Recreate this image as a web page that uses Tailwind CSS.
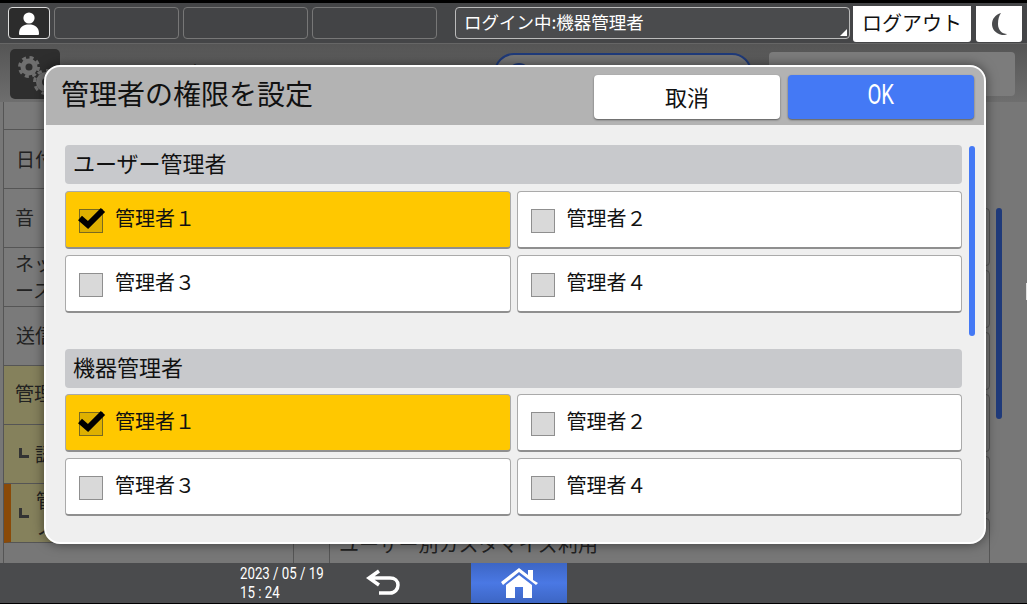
<!DOCTYPE html>
<html lang="ja">
<head>
<meta charset="UTF-8">
<title>管理者の権限を設定</title>
<script src="https://cdn.jsdelivr.net/npm/@tailwindcss/browser@4"></script>
</head>
<body class="bg-black font-['Noto_Sans_CJK_JP','Noto_Sans',sans-serif] text-[#111]">
<div class="relative w-[1027px] h-[604px] overflow-hidden flex flex-col bg-[#777]">

  <!-- top status bar -->
  <div class="h-[3px] bg-black"></div>
  <div class="h-[41px] bg-[#444547] border-b border-[#666] flex items-start pt-[4px] pl-[8px] shrink-0">
    <div class="w-[42px] h-[32px] rounded-[4px] border border-[#ddd] bg-[#2c2c2c] flex items-center justify-center">
      <svg width="22" height="26" viewBox="0 0 22 26"><circle cx="11" cy="8" r="5.6" fill="#fff"/><path d="M1 24c0-7 4-9.500 10-9.500s10 2.500 10 9.500c0 .8-.6 1-1.500 1h-17c-.9 0-1.500-.2-1.500-1z" fill="#fff"/></svg>
    </div>
    <div class="w-[125px] h-[32px] ml-[4px] rounded-[4px] border border-[#777] bg-[#434446]"></div>
    <div class="w-[125px] h-[32px] ml-[4px] rounded-[4px] border border-[#777] bg-[#434446]"></div>
    <div class="w-[125px] h-[32px] ml-[4px] rounded-[4px] border border-[#777] bg-[#434446]"></div>
    <div class="relative w-[395px] h-[32px] ml-[18px] rounded-[4px] border border-[#bbb] bg-[#4a4b4d] text-white text-[17.5px] leading-[28px] pl-[8px]">
      ログイン中:機器管理者
      <div class="absolute right-[2px] bottom-[2px] w-0 h-0 border-l-[7px] border-l-transparent border-b-[7px] border-b-white"></div>
    </div>
    <div class="w-[118px] h-[36px] -mt-[1px] ml-[3px] rounded-b-[3px] bg-white text-[20px] leading-[33px] text-center">ログアウト</div>
    <div class="w-[46px] h-[36px] -mt-[1px] ml-[5px] rounded-b-[3px] bg-white flex items-center justify-center">
      <svg width="18" height="24" viewBox="0 0 18 24"><path d="M11 1C5 3 2 7 2 12s3 9 10 11c2 .3 4 0 5-1-5 0-9-4-9-10 0-5 1-8 3-11z" fill="#4a4b4d"/></svg>
    </div>
  </div>

  <!-- screen header behind the dialog -->
  <div class="h-[58px] bg-gradient-to-b from-[#555] to-[#6e6e6e] flex items-start pt-[5px] pl-[10px] shrink-0">
    <div class="w-[50px] h-[50px] rounded-[5px] bg-[#2e2e2e] flex items-start pt-[6px] pl-[5px]">
      <svg width="44" height="40" viewBox="0 0 44 40" fill="none" stroke="#6f6f6f"><circle cx="14" cy="12" r="6" stroke-width="5"/><circle cx="14" cy="12" r="9.500" stroke-width="3" stroke-dasharray="4 3.500"/><circle cx="31" cy="27" r="7" stroke-width="6"/><circle cx="31" cy="27" r="11.500" stroke-width="3" stroke-dasharray="4.500 4.500"/></svg>
    </div>
    <div class="ml-[105px] mt-[12px] text-[20px] leading-[26px] text-[#222]">設定</div>
    <div class="ml-[289px] mt-[4px] w-[258px] h-[40px] rounded-[20px] border-2 border-[#1f3a7a] bg-[#757575] pl-[12px] pt-[8px]">
      <span class="block w-[22px] h-[22px] rounded-full border-2 border-[#1f3a7a]"></span>
    </div>
    <div class="ml-[17px] mt-[3px] w-[246px] h-[44px] rounded-[4px] bg-[#7c7c7c]"></div>
  </div>

  <!-- main list -->
  <div class="flex-1 min-h-0 flex overflow-hidden">
    <div class="w-[290px] ml-[3px] border-l border-[#555] text-[19px] leading-[27px] shrink-0 text-[#222]">
      <div class="h-[28px] bg-[#7a7a7a] border-b border-[#555]"></div>
      <div class="h-[59px] bg-[#7a7a7a] border-b border-[#555] pl-[12px] pb-[2px] flex items-center">日付</div>
      <div class="h-[59px] bg-[#7a7a7a] border-b border-[#555] pl-[11px] pb-[4px] flex items-center">音</div>
      <div class="h-[59px] bg-[#7a7a7a] border-b border-[#555] pl-[11px] pb-[2px] flex items-center">ネットワーク／イ<br>ース</div>
      <div class="h-[59px] bg-[#7a7a7a] border-b border-[#555] pl-[12px] pb-[4px] flex items-center">送信</div>
      <div class="h-[59px] bg-[#85815c] border-b border-[#555] pl-[11px] pb-[5px] flex items-center">管理</div>
      <div class="h-[59px] bg-[#85815c] border-b border-[#555] pl-[15px] pb-[2px] flex items-center gap-[6px]"><span class="w-[10px] h-[10px] border-l-[3px] border-b-[3px] border-[#333]"></span>認</div>
      <div class="h-[59px] bg-[#85815c] border-b border-[#555] border-l-[7px] border-l-[#8a4a08] pl-[8px] flex items-center gap-[7px]"><span class="w-[10px] h-[10px] border-l-[3px] border-b-[3px] border-[#333]"></span><span>管<br>ノ</span></div>
    </div>
    <div class="flex-1 relative pl-[35px] pt-[106px] border-l border-[#555]">
      <div class="flex flex-col gap-[4px] w-[661px]">
        <div class="h-[58px] rounded-[4px] border border-[#555]"></div>
        <div class="h-[58px] rounded-[4px] border border-[#555]"></div>
        <div class="h-[58px] rounded-[4px] border border-[#555]"></div>
        <div class="h-[58px] rounded-[4px] border border-[#555]"></div>
        <div class="h-[58px] rounded-[4px] border border-[#555]"></div>
        <div class="h-[58px] rounded-[4px] border border-[#555] pl-[9px] pt-[12px] text-[20px] leading-[26px] text-[#222]">ユーザー別カスタマイズ利用</div>
      </div>
      <div class="absolute left-[702px] top-[106px] w-[6px] h-[211px] rounded-full bg-[#1f3a7a]"></div>
    </div>
  </div>

  <!-- bottom bar -->
  <div class="h-[41px] bg-[#4a4b4d] border-b border-black shrink-0 flex items-center">
    <div class="ml-[240px] w-[110px] origin-left scale-x-[0.78] text-white font-['Roboto',sans-serif] text-[17px] leading-[19px] whitespace-nowrap">2023 / 05 / 19<br>15 : 24</div>
    <svg class="ml-[16px]" width="36" height="28" viewBox="0 0 36 28" fill="none" stroke="#fff" stroke-width="3.500"><path d="M13 2 3 9l10 7M4 9h20c5 0 8 3 8 7s-3 8-8 8H13"/></svg>
    <div class="ml-[69px] w-[96px] h-full bg-gradient-to-b from-[#3d66c4] via-[#4a78e4] to-[#3d66c4] flex items-center justify-center">
      <svg width="38" height="32" viewBox="0 0 38 32"><path d="M1 15 19 1l9 7V3h5v10l5 3-2 2-17-13L3 18z" fill="#fff"/><path d="M6 18 19 8l13 10v13H23V20h-8v11H6z" fill="#fff"/></svg>
    </div>
  </div>

  <!-- pointer at the right edge -->
  <div class="absolute left-[1026px] top-[283px] w-[4px] h-[17px] bg-black border border-[#ddd]"></div>

  <!-- dialog -->
  <div class="absolute left-[44px] top-[65px] w-[942px] h-[479px] rounded-[16px] border-2 border-white bg-[#efefef] overflow-hidden shadow-[0_0_12px_rgba(0,0,0,0.5)]">
    <div class="h-[58px] bg-[#b3b3b3] flex items-start pl-[15px] pr-[10px]">
      <h1 class="text-[28px] leading-[53px] flex-1">管理者の権限を設定</h1>
      <button class="mt-[8px] w-[186px] h-[44px] rounded-[4px] bg-white shadow-[0_1px_2px_rgba(0,0,0,0.5)] text-[22px] leading-[40px] pb-[3px]">取消</button>
      <button class="mt-[8px] ml-[8px] w-[186px] h-[44px] rounded-[4px] bg-[#4479f5] shadow-[0_1px_2px_rgba(0,0,0,0.5)] text-white text-[27px] font-['Roboto',sans-serif] pb-[3px]"><span class="inline-block scale-x-75">OK</span></button>
    </div>
    <div class="relative pl-[19px] pt-[20px] w-[916px]">
      <div class="absolute left-[923px] top-[21px] w-[6px] h-[190px] rounded-full bg-[#4479f5]"></div>

      <div class="h-[39px] rounded-[4px] bg-[#c8c9cc] text-[22px] leading-[34px] pl-[8px]">ユーザー管理者</div>
      <div class="grid grid-cols-2 gap-x-[6px] gap-y-[6px] mt-[7px]">
        <div class="h-[58px] rounded-[4px] bg-[#ffc800] border border-[#aaa] border-b-2 border-b-[#8f8f8f] flex items-center pl-[13px] text-[20px]">
          <span class="relative w-[24px] h-[24px] mt-[2px] bg-[#deb000] border border-[#7a6a20] shrink-0">
            <svg class="absolute -left-[3px] -top-[4px]" width="29" height="24" viewBox="0 0 29 24" fill="none" stroke="#000" stroke-width="6"><path d="M3 12l8 7L26 4"/></svg>
          </span>
          <span class="ml-[12px] pb-[3px]">管理者１</span>
        </div>
        <div class="h-[58px] rounded-[4px] bg-white border border-[#aaa] border-b-2 border-b-[#8f8f8f] flex items-center pl-[13px] text-[20px]">
          <span class="w-[24px] h-[24px] mt-[2px] bg-[#d9d9d9] border border-[#8f8f8f] shrink-0"></span>
          <span class="ml-[12px] pb-[3px]">管理者２</span>
        </div>
        <div class="h-[58px] rounded-[4px] bg-white border border-[#aaa] border-b-2 border-b-[#8f8f8f] flex items-center pl-[13px] text-[20px]">
          <span class="w-[24px] h-[24px] mt-[2px] bg-[#d9d9d9] border border-[#8f8f8f] shrink-0"></span>
          <span class="ml-[12px] pb-[3px]">管理者３</span>
        </div>
        <div class="h-[58px] rounded-[4px] bg-white border border-[#aaa] border-b-2 border-b-[#8f8f8f] flex items-center pl-[13px] text-[20px]">
          <span class="w-[24px] h-[24px] mt-[2px] bg-[#d9d9d9] border border-[#8f8f8f] shrink-0"></span>
          <span class="ml-[12px] pb-[3px]">管理者４</span>
        </div>
      </div>

      <div class="h-[39px] mt-[36px] rounded-[4px] bg-[#c8c9cc] text-[22px] leading-[34px] pl-[8px]">機器管理者</div>
      <div class="grid grid-cols-2 gap-x-[6px] gap-y-[6px] mt-[6px]">
        <div class="h-[58px] rounded-[4px] bg-[#ffc800] border border-[#aaa] border-b-2 border-b-[#8f8f8f] flex items-center pl-[13px] text-[20px]">
          <span class="relative w-[24px] h-[24px] mt-[2px] bg-[#deb000] border border-[#7a6a20] shrink-0">
            <svg class="absolute -left-[3px] -top-[4px]" width="29" height="24" viewBox="0 0 29 24" fill="none" stroke="#000" stroke-width="6"><path d="M3 12l8 7L26 4"/></svg>
          </span>
          <span class="ml-[12px] pb-[3px]">管理者１</span>
        </div>
        <div class="h-[58px] rounded-[4px] bg-white border border-[#aaa] border-b-2 border-b-[#8f8f8f] flex items-center pl-[13px] text-[20px]">
          <span class="w-[24px] h-[24px] mt-[2px] bg-[#d9d9d9] border border-[#8f8f8f] shrink-0"></span>
          <span class="ml-[12px] pb-[3px]">管理者２</span>
        </div>
        <div class="h-[58px] rounded-[4px] bg-white border border-[#aaa] border-b-2 border-b-[#8f8f8f] flex items-center pl-[13px] text-[20px]">
          <span class="w-[24px] h-[24px] mt-[2px] bg-[#d9d9d9] border border-[#8f8f8f] shrink-0"></span>
          <span class="ml-[12px] pb-[3px]">管理者３</span>
        </div>
        <div class="h-[58px] rounded-[4px] bg-white border border-[#aaa] border-b-2 border-b-[#8f8f8f] flex items-center pl-[13px] text-[20px]">
          <span class="w-[24px] h-[24px] mt-[2px] bg-[#d9d9d9] border border-[#8f8f8f] shrink-0"></span>
          <span class="ml-[12px] pb-[3px]">管理者４</span>
        </div>
      </div>
    </div>
  </div>
</div>
</body>
</html>
